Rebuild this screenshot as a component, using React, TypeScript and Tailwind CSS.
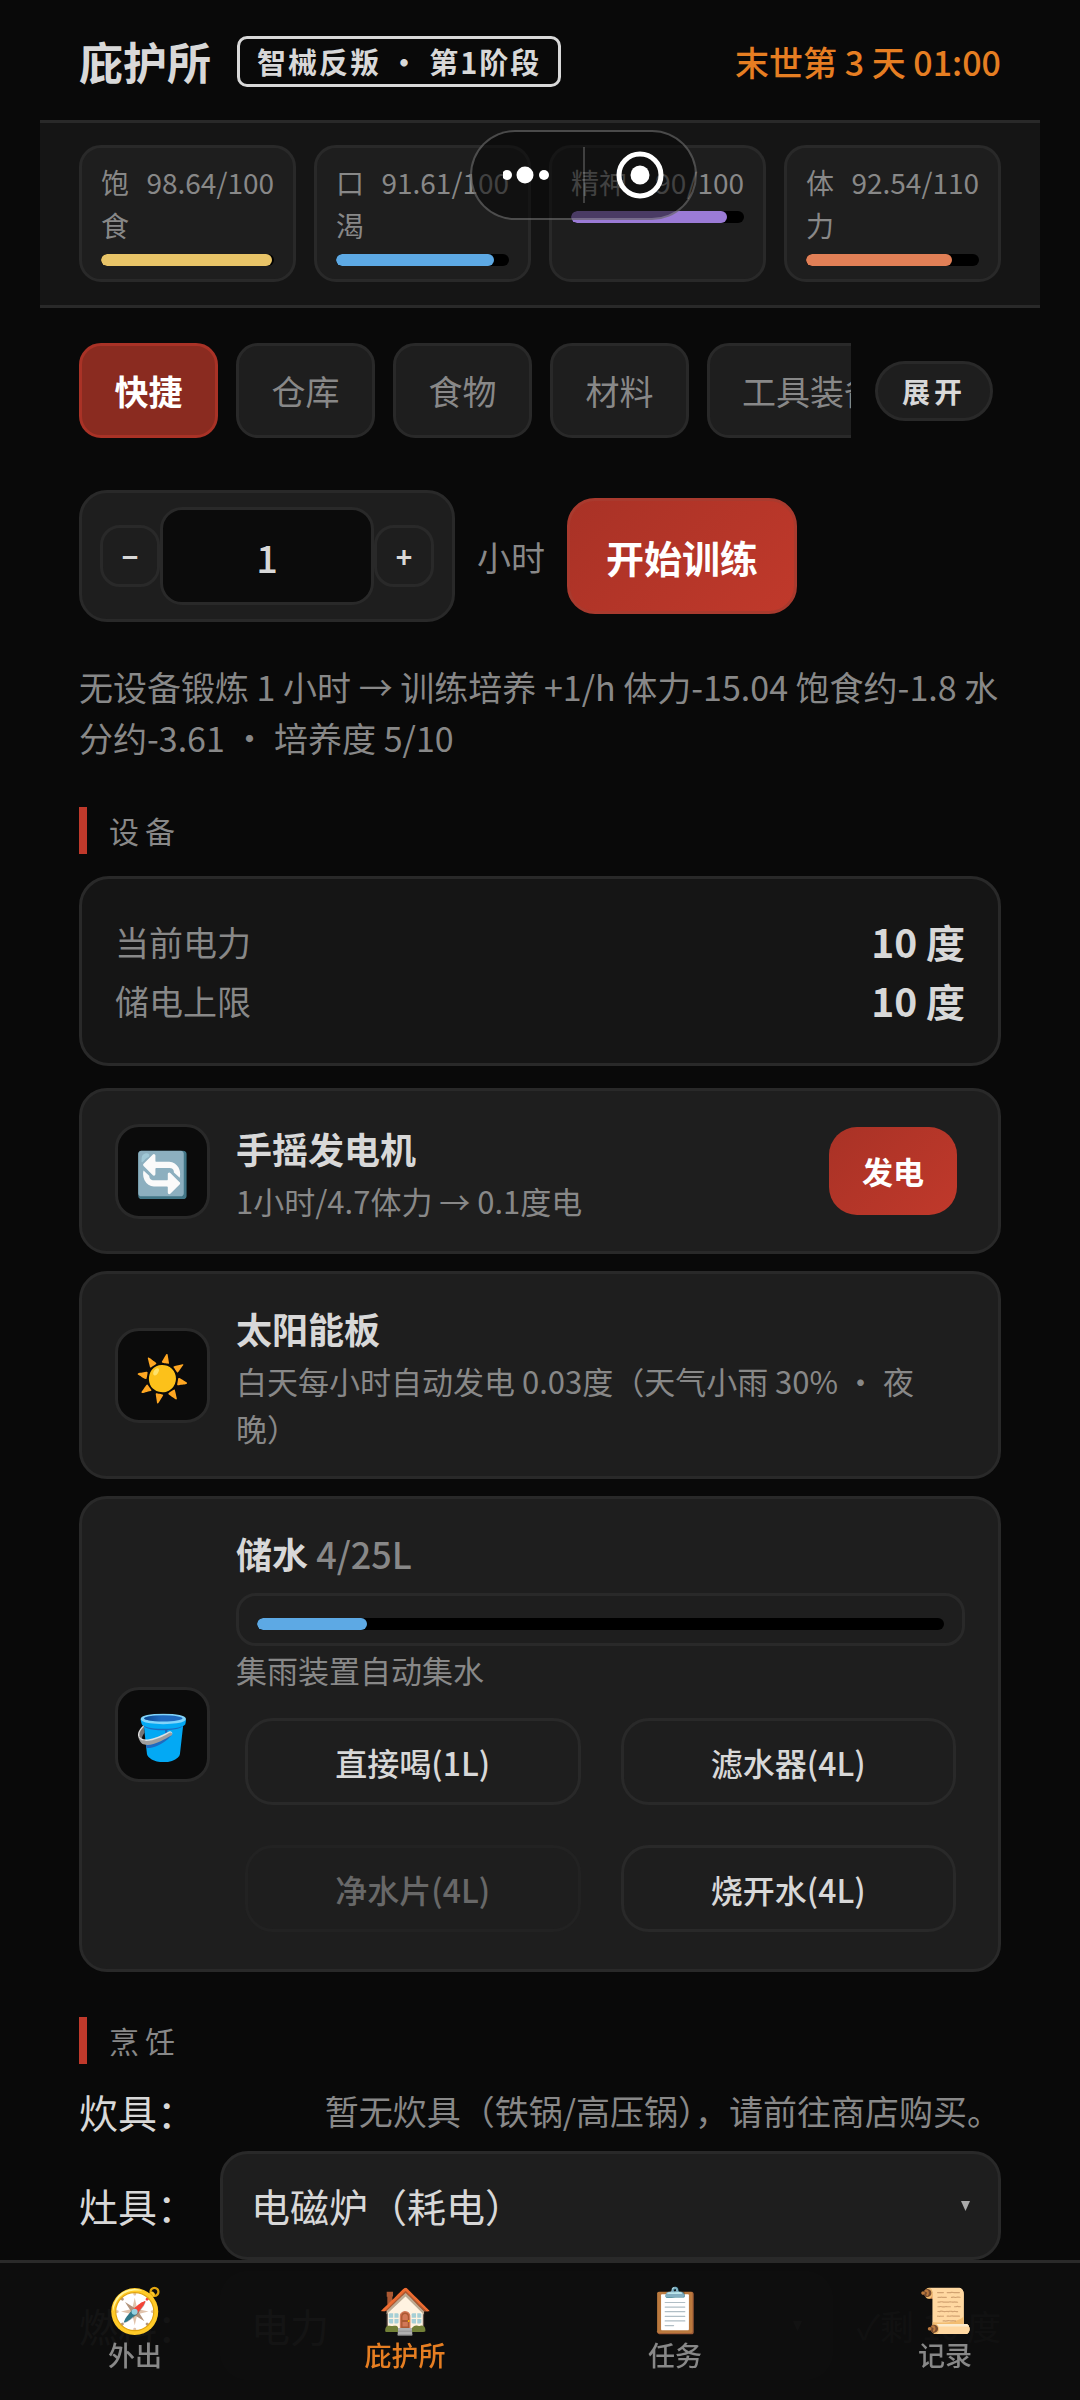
import { useState } from "react";
import type { ReactNode } from "react";

const stats = [
  { label: "饱食", value: 98.64, max: 100, color: "bg-[#e8c468]" },
  { label: "口渴", value: 91.61, max: 100, color: "bg-[#5da9e4]" },
  { label: "精神", value: 90, max: 100, color: "bg-[#9b7bd6]" },
  { label: "体力", value: 92.54, max: 110, color: "bg-[#e17f56]" },
];

const tabs = ["快捷", "仓库", "食物", "材料", "工具装备"];

const waterActions = [
  { label: "直接喝(1L)" },
  { label: "滤水器(4L)" },
  { label: "净水片(4L)", disabled: true },
  { label: "烧开水(4L)" },
];

const navItems = [
  { icon: "🧭", label: "外出" },
  { icon: "🏠", label: "庇护所", active: true },
  { icon: "📋", label: "任务" },
  { icon: "📜", label: "记录" },
];

function Bar({ value, max, color }: { value: number; max: number; color: string }) {
  return (
    <div className="h-3 rounded-full bg-black overflow-hidden">
      <div className={`h-full rounded-full ${color}`} style={{ width: `${(value / max) * 100}%` }} />
    </div>
  );
}

function SectionTitle({ children }: { children: ReactNode }) {
  return (
    <h2 className="border-l-8 border-[#c0392b] pl-[22px] text-[30px] leading-[47px] tracking-[6px] text-[#888]">
      {children}
    </h2>
  );
}

function DeviceCard({ icon, children }: { icon: ReactNode; children: ReactNode }) {
  return (
    <div className="flex items-center gap-[26px] min-h-[166px] rounded-[28px] border-[3px] border-[#292929] bg-[#1e1e1e] px-[33px] py-[25px]">
      <div className="flex items-center justify-center size-[95px] shrink-0 rounded-3xl border-[3px] border-[#292929] bg-[#0b0b0b] text-[44px]">
        {icon}
      </div>
      {children}
    </div>
  );
}

function MiniProgramCapsule() {
  return (
    <div className="absolute left-[470px] top-[130px] w-[227px] h-[90px] flex items-center rounded-full border-2 border-white/25 bg-[#080808]/55">
      <button aria-label="更多" className="flex-1 flex justify-center">
        <svg width="48" height="18" viewBox="0 0 48 18" fill="#fff">
          <circle cx="4" cy="9" r="5" />
          <circle cx="22" cy="9" r="8.5" />
          <circle cx="41" cy="9" r="5" />
        </svg>
      </button>
      <span className="w-0.5 h-14 bg-white/20" />
      <button aria-label="关闭" className="flex-1 flex justify-center">
        <svg width="48" height="48" viewBox="0 0 48 48">
          <circle cx="24" cy="24" r="21" fill="none" stroke="#fff" strokeWidth="5" />
          <circle cx="24" cy="24" r="9.5" fill="#fff" />
        </svg>
      </button>
    </div>
  );
}

export default function App() {
  const [tab, setTab] = useState("快捷");
  const [hours, setHours] = useState(1);

  return (
    <div className="relative min-h-screen bg-[#090909] text-[#d8d8d8] font-['Noto_Sans_CJK_SC',sans-serif]">
      <header className="flex items-center justify-between px-[79px] pt-9 pb-[33px]">
        <div className="flex items-center gap-[26px]">
          <h1 className="text-[44px] leading-[51px] font-bold">庇护所</h1>
          <span className="rounded-[10px] border-[3px] border-[#d8d8d8] px-[17px] text-[29px] leading-[45px] font-bold tracking-[2px]">
            智械反叛 · 第1阶段
          </span>
        </div>
        <span className="text-[34px] leading-[51px] font-medium text-[#e67e22]">末世第 3 天 01:00</span>
      </header>

      <section className="mx-10 grid grid-cols-4 gap-[18px] border-y-[3px] border-[#292929] bg-[#151515] px-[39px] pt-[22px] pb-[23px]">
        {stats.map((s) => (
          <div key={s.label} className="rounded-[22px] border-[3px] border-[#292929] bg-[#1e1e1e] px-[19px] py-[13px]">
            <div className="flex justify-between gap-3 mb-[7px] text-[28px] leading-[43px] text-[#888]">
              <span>{s.label}</span>
              <span>
                {s.value}/{s.max}
              </span>
            </div>
            <Bar value={s.value} max={s.max} color={s.color} />
          </div>
        ))}
      </section>

      <main className="px-[79px] pt-[35px]">
        <div className="flex items-center gap-6 pr-2">
          <div className="flex flex-1 gap-[18px] overflow-hidden">
            {tabs.map((t) => (
              <button
                key={t}
                onClick={() => setTab(t)}
                className={
                  t === tab
                    ? "shrink-0 min-w-[139px] h-[95px] px-8 rounded-[22px] border-[3px] border-[#a93226] bg-[#8a2b20] text-[34px] font-bold text-white"
                    : "shrink-0 min-w-[139px] h-[95px] px-8 rounded-[22px] border-[3px] border-[#292929] bg-[#1e1e1e] text-[34px] text-[#888]"
                }
              >
                {t}
              </button>
            ))}
          </div>
          <button className="h-[60px] px-6 rounded-full border-[3px] border-[#292929] bg-[#1e1e1e] text-[28px] leading-[40px] font-bold tracking-[4px]">
            展开
          </button>
        </div>

        <div className="mt-[52px] flex items-center gap-[22px]">
          <div className="flex items-center rounded-[28px] border-[3px] border-[#292929] bg-[#1e1e1e] px-[18px] py-[14px]">
            <button
              aria-label="减少"
              onClick={() => setHours(Math.max(1, hours - 1))}
              className="w-[60px] h-[62px] rounded-[20px] border-[3px] border-[#292929] text-[28px] font-bold leading-none"
            >
              −
            </button>
            <input
              aria-label="训练小时"
              value={hours}
              onChange={(e) => setHours(Number(e.target.value) || 1)}
              className="w-[214px] h-[98px] rounded-[22px] border-[3px] border-[#292929] bg-[#0b0b0b] text-center text-[38px] font-medium"
            />
            <button
              aria-label="增加"
              onClick={() => setHours(hours + 1)}
              className="w-[60px] h-[62px] rounded-[20px] border-[3px] border-[#292929] text-[28px] font-bold leading-none"
            >
              +
            </button>
          </div>
          <span className="text-[34px] text-[#888]">小时</span>
          <button className="h-[116px] px-[36px] rounded-[28px] border-[3px] border-[#a93a2e] bg-linear-135 from-[#a93226] to-[#c0392b] text-[38px] font-bold text-white">
            开始训练
          </button>
        </div>

        <p className="mt-[39px] mb-11 text-[34px] leading-[51px] text-[#888]">
          无设备锻炼 1 小时 → 训练培养 +1/h 体力-15.04 饱食约-1.8 水分约-3.61 · 培养度 5/10
        </p>

        <SectionTitle>设备</SectionTitle>
        <dl className="mt-[22px] mb-[22px] rounded-[30px] border-[3px] border-[#292929] bg-[#151515] px-[33px] py-[33px]">
          {["当前电力", "储电上限"].map((k) => (
            <div key={k} className="flex items-center justify-between leading-[59px]">
              <dt className="text-[34px] text-[#888]">{k}</dt>
              <dd className="text-[39px] font-bold">10 度</dd>
            </div>
          ))}
        </dl>

        <div className="flex flex-col gap-[17px]">
          <DeviceCard icon="🔄">
            <div className="flex-1">
              <h3 className="text-[36px] leading-[58px] font-bold">手摇发电机</h3>
              <p className="text-[31px] leading-[47px] text-[#888]">1小时/4.7体力 → 0.1度电</p>
            </div>
            <button className="h-[88px] mr-2 px-[33px] rounded-[28px] bg-linear-135 from-[#a93226] to-[#c0392b] text-[31px] font-bold text-white">
              发电
            </button>
          </DeviceCard>

          <DeviceCard icon="☀️">
            <div className="flex-1">
              <h3 className="text-[36px] leading-[58px] font-bold">太阳能板</h3>
              <p className="pr-3 text-[31px] leading-[47px] text-[#888]">
                白天每小时自动发电 0.03度（天气小雨 30% · 夜晚）
              </p>
            </div>
          </DeviceCard>

          <DeviceCard icon="🪣">
            <div className="flex-1">
              <h3 className="text-[36px] leading-[58px] font-bold">
                储水 <span className="font-medium text-[#888]">4/25L</span>
              </h3>
              <div className="mt-[11px] rounded-[20px] border-[3px] border-[#292929] px-[18px] pt-[22px] pb-[13px]">
                <Bar value={4} max={25} color="bg-[#5da9e4]" />
              </div>
              <p className="text-[31px] leading-[47px] text-[#888]">集雨装置自动集水</p>
              <div className="grid grid-cols-2 gap-10 px-[9px] pt-[25px] pb-3">
                {waterActions.map((a) => (
                  <button
                    key={a.label}
                    disabled={a.disabled}
                    className="h-[87px] rounded-[28px] border-[3px] border-[#292929] text-[32px] font-medium disabled:opacity-40"
                  >
                    {a.label}
                  </button>
                ))}
              </div>
            </div>
          </DeviceCard>
        </div>

        <div className="mt-[45px]">
          <SectionTitle>烹饪</SectionTitle>
        </div>
        <div className="mt-[18px] flex items-center justify-between leading-[58px]">
          <span className="text-[39px]">炊具：</span>
          <span className="text-[34px] text-[#888]">暂无炊具（铁锅/高压锅），请前往商店购买。</span>
        </div>
        <div className="mt-[11px] flex items-center">
          <label htmlFor="stove" className="w-[141px] shrink-0 text-[39px]">
            灶具：
          </label>
          <div className="relative flex-1">
            <select
              id="stove"
              className="w-full h-[109px] appearance-none rounded-[28px] border-[3px] border-[#292929] bg-[#1e1e1e] px-7 text-[39px]"
            >
              <option>电磁炉（耗电）</option>
            </select>
            <svg className="absolute right-[31px] top-[50px]" width="9" height="10" viewBox="0 0 9 10" fill="#aaa">
              <path d="M0 0h9L4.5 10z" />
            </svg>
          </div>
        </div>
        <div className="mt-[11px] flex items-center">
          <label htmlFor="fuel" className="w-[141px] shrink-0 text-[39px]">
            燃料：
          </label>
          <div className="relative flex-1">
            <select
              id="fuel"
              className="w-full h-[109px] appearance-none rounded-[28px] border-[3px] border-[#292929] bg-[#1e1e1e] px-7 text-[39px]"
            >
              <option>电力</option>
            </select>
            <svg className="absolute right-[31px] top-[50px]" width="9" height="10" viewBox="0 0 9 10" fill="#aaa">
              <path d="M0 0h9L4.5 10z" />
            </svg>
          </div>
          <span className="ml-6 text-[34px] text-[#888]">✓剩 10 度</span>
        </div>
      </main>

      <nav className="fixed inset-x-0 bottom-0 grid grid-cols-4 border-t-[3px] border-[#2a2a2a] bg-[#0d0d0d]/97 pt-[18px] pb-6">
        {navItems.map((n) => (
          <a
            key={n.label}
            href="#"
            className={
              n.active
                ? "flex flex-col items-center text-[27px] leading-[42px] font-medium text-[#e67e22]"
                : "flex flex-col items-center text-[27px] leading-[42px] font-medium text-[#888]"
            }
          >
            <span className="text-[44px] leading-[53px]">{n.icon}</span>
            {n.label}
          </a>
        ))}
      </nav>

      <MiniProgramCapsule />
    </div>
  );
}
